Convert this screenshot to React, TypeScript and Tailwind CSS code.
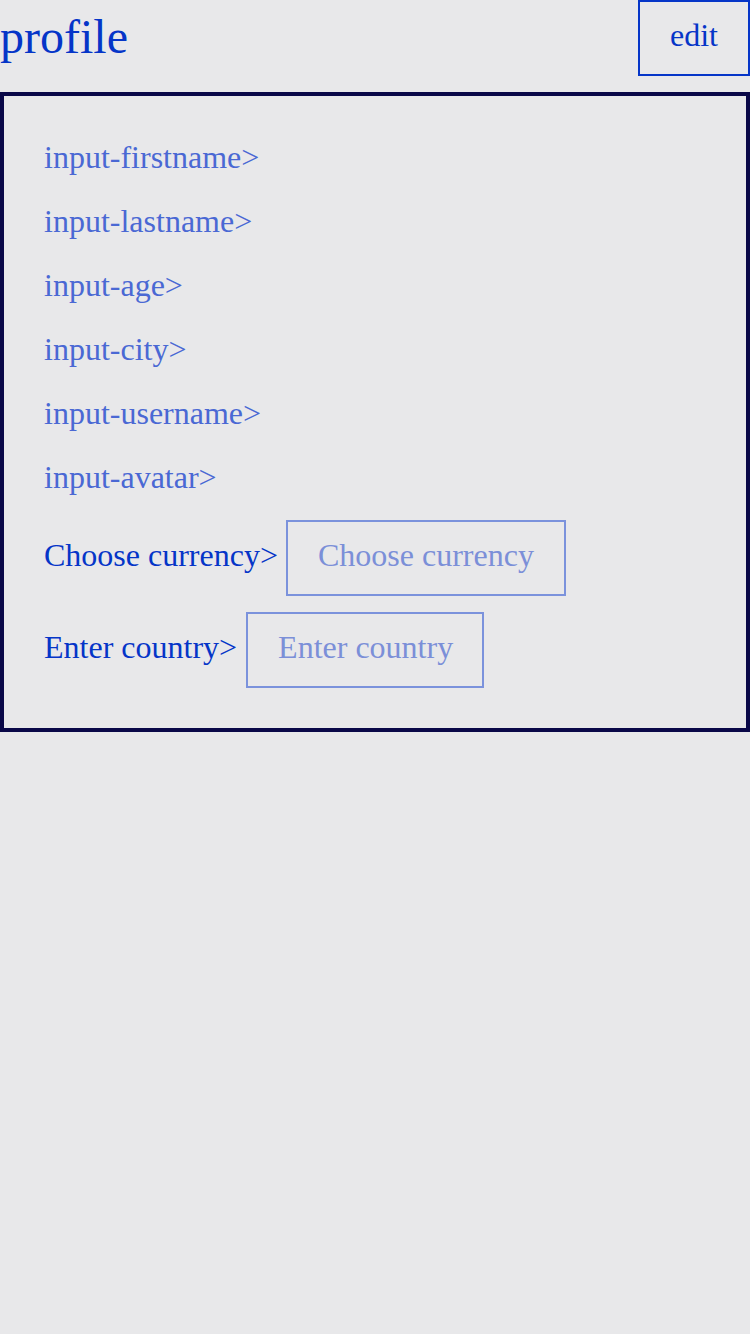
import React from "react";

const fields = [
  "input-firstname",
  "input-lastname",
  "input-age",
  "input-city",
  "input-username",
  "input-avatar",
];

function Profile() {
  return (
    <div className="min-h-[1334px] bg-[#e8e8ea] font-['Liberation_Serif',serif]">
      <header className="flex justify-between items-start mb-4">
        <h1 className="text-[48px] leading-[55px] text-[#0535c8] mt-[9px]">profile</h1>
        <button className="border-2 border-[#0535c8] px-[30px] pt-[15px] pb-[21px] text-[32px] leading-[36px] text-[#0535c8]">
          edit
        </button>
      </header>
      <div className="border-4 border-[#0a0848] px-10 pt-[43px] pb-10 flex flex-col gap-[27.2px]">
        {fields.map((f) => (
          <div key={f} className="text-[32px] leading-[36.8px] text-[#4a68d4]">
            {f}&gt;
          </div>
        ))}
        <div className="flex flex-col gap-4 -mt-[3px]">
          <div className="flex items-baseline gap-2">
            <span className="text-[32px] leading-[36.8px] text-[#0535c8]">Choose currency&gt;</span>
            <div className="border-2 border-[#7b92dc] px-[30px] pt-[15px] pb-[21px] text-[32px] leading-[36px] text-[#7b8fd8]">
              Choose currency
            </div>
          </div>
          <div className="flex items-baseline gap-[9px]">
            <span className="text-[32px] leading-[36.8px] text-[#0535c8]">Enter country&gt;</span>
            <div className="border-2 border-[#7b92dc] pl-[30px] pr-[29px] pt-[15px] pb-[21px] text-[32px] leading-[36px] text-[#7b8fd8]">
              Enter country
            </div>
          </div>
        </div>
      </div>
    </div>
  );
}

export default function App() {
  return <Profile />;
}
